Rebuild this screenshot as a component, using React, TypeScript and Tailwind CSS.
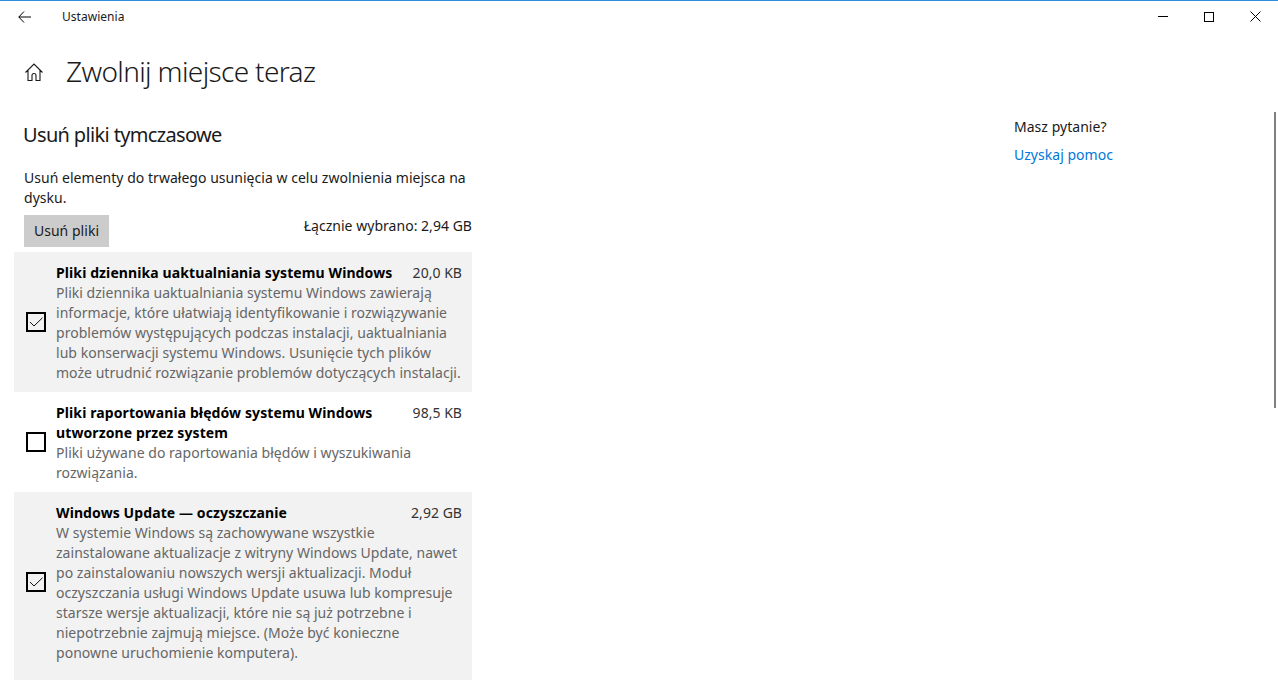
type Item = {
  title: string[];
  size: string;
  desc: string[];
  checked: boolean;
  shaded: boolean;
  cut?: boolean;
};

const items: Item[] = [
  {
    title: ["Pliki dziennika uaktualniania systemu Windows"],
    size: "20,0 KB",
    desc: [
      "Pliki dziennika uaktualniania systemu Windows zawierają",
      "informacje, które ułatwiają identyfikowanie i rozwiązywanie",
      "problemów występujących podczas instalacji, uaktualniania",
      "lub konserwacji systemu Windows. Usunięcie tych plików",
      "może utrudnić rozwiązanie problemów dotyczących instalacji.",
    ],
    checked: true,
    shaded: true,
  },
  {
    title: ["Pliki raportowania błędów systemu Windows", "utworzone przez system"],
    size: "98,5 KB",
    desc: ["Pliki używane do raportowania błędów i wyszukiwania", "rozwiązania."],
    checked: false,
    shaded: false,
  },
  {
    title: ["Windows Update — oczyszczanie"],
    size: "2,92 GB",
    desc: [
      "W systemie Windows są zachowywane wszystkie",
      "zainstalowane aktualizacje z witryny Windows Update, nawet",
      "po zainstalowaniu nowszych wersji aktualizacji. Moduł",
      "oczyszczania usługi Windows Update usuwa lub kompresuje",
      "starsze wersje aktualizacji, które nie są już potrzebne i",
      "niepotrzebnie zajmują miejsce. (Może być konieczne",
      "ponowne uruchomienie komputera).",
    ],
    checked: true,
    shaded: true,
    cut: true,
  },
];

function Checkbox({ checked }: { checked: boolean }) {
  return (
    <div className="w-5 h-5 mb-[2px] border-2 border-black shrink-0 flex items-center justify-center">
      {checked && (
        <svg width="16" height="16" viewBox="0 0 16 16" fill="none">
          <path d="M2 8 L6 12 L14.5 3.8" stroke="#111" strokeWidth="1" />
        </svg>
      )}
    </div>
  );
}

function Row({ item }: { item: Item }) {
  return (
    <div className={`flex items-center pl-3 pr-[10px] pt-[11px] ${item.cut ? "pb-[17px]" : "pb-[9px]"} ${item.shaded ? "bg-[#f2f2f2]" : ""}`}>
      <Checkbox checked={item.checked} />
      <div className="ml-[10px] flex-1">
        <div className="flex justify-between">
          <div className="font-bold text-black tracking-[0.1px]">
            {item.title.map((t) => (
              <div key={t} className="whitespace-nowrap">{t}</div>
            ))}
          </div>
          <div className="text-[#333] whitespace-nowrap">{item.size}</div>
        </div>
        <div className="text-[#666]">
          {item.desc.map((d) => (
            <div key={d} className="whitespace-nowrap">{d}</div>
          ))}
        </div>
      </div>
    </div>
  );
}

export default function App() {
  return (
    <div className="relative h-[680px] w-[1278px] overflow-hidden bg-white text-[14px] leading-5 tracking-[0.03px] text-[#1a1a1a] font-['Noto_Sans','Open_Sans',sans-serif]">
      <div className="h-px bg-[#2b8fdc]" />

      <div className="flex items-center h-[31px]">
        <div className="w-[48px] flex justify-center">
          <svg width="13" height="12" viewBox="0 0 13 12" fill="none">
            <path d="M6 0.5 L0.8 6 L6 11.5 M0.8 6 H13" stroke="#000" strokeWidth="1" />
          </svg>
        </div>
        <span className="ml-[14px] text-[12px]">Ustawienia</span>
        <div className="ml-auto flex items-center">
          <div className="w-[46px] flex justify-center">
            <div className="w-[10px] h-px bg-black" />
          </div>
          <div className="w-[46px] flex justify-center">
            <div className="w-[10px] h-[10px] border border-black" />
          </div>
          <div className="w-[46px] flex justify-center">
            <svg width="11" height="11" viewBox="0 0 11 11" fill="none">
              <path d="M0.5 0.5 L10.5 10.5 M10.5 0.5 L0.5 10.5" stroke="#000" strokeWidth="1" />
            </svg>
          </div>
        </div>
      </div>

      <div className="flex">
        <div className="w-[472px] shrink-0">
          <div className="flex items-center h-[40px] mt-[19px] pl-[24px]">
            <svg width="20" height="20" viewBox="0 0 20 20" fill="none">
              <path
                d="M1.5 11.5 L10 3 L18.5 11.5 M4 9.5 V19.5 H8 V14.5 A2 2 0 0 1 12 14.5 V19.5 H16 V9.5"
                stroke="#1a1a1a"
                strokeWidth="1.1"
              />
            </svg>
            <h1 className="ml-[22px] text-[28px] leading-9 font-light tracking-[-0.65px] whitespace-nowrap">Zwolnij miejsce teraz</h1>
          </div>

          <h2 className="ml-[23px] mt-[30px] text-[20px] leading-7 tracking-[-0.65px] whitespace-nowrap">Usuń pliki tymczasowe</h2>

          <p className="ml-[24px] mt-[19px]">
            Usuń elementy do trwałego usunięcia w celu zwolnienia miejsca na
            <br />
            dysku.
          </p>

          <div className="ml-[24px] mt-[7px] flex items-start justify-between">
            <div className="h-8 w-[85px] bg-[#cccccc] flex items-center justify-center">Usuń pliki</div>
            <span className="mt-px whitespace-nowrap">Łącznie wybrano: 2,94 GB</span>
          </div>

          <div className="ml-[14px] mt-[5px]">
            {items.map((item) => (
              <Row key={item.size} item={item} />
            ))}
          </div>
        </div>

        <div className="ml-[542px] mt-[85px]">
          <div>Masz pytanie?</div>
          <div className="mt-2 text-[#0078d7]">Uzyskaj pomoc</div>
        </div>
      </div>

      <div className="absolute right-[2px] top-[112px] h-[296px] w-[2px] bg-[#808080]" />
    </div>
  );
}
